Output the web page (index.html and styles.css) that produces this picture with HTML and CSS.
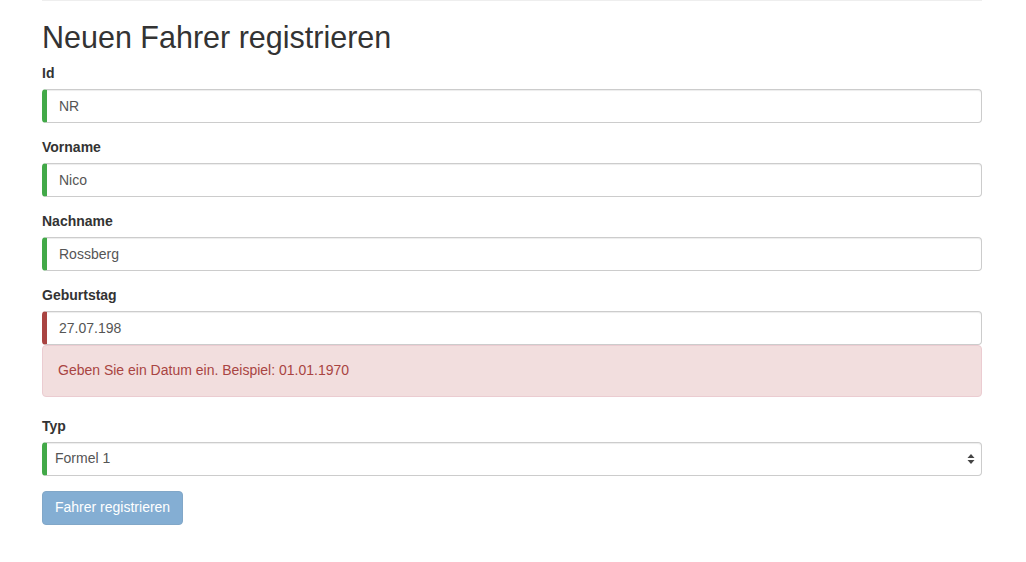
FILE: index.html
```html
<!DOCTYPE html>
<html lang="de">
<head>
<meta charset="utf-8">
<title>Neuen Fahrer registrieren</title>
<link rel="stylesheet" href="styles.css">
</head>
<body>
<div class="container">
  <hr class="rule">
  <h2 class="title">Neuen Fahrer registrieren</h2>
  <form class="form">
    <div class="form-group">
      <label class="label">Id</label>
      <input class="input valid" type="text" value="NR">
    </div>
    <div class="form-group">
      <label class="label">Vorname</label>
      <input class="input valid" type="text" value="Nico">
    </div>
    <div class="form-group">
      <label class="label">Nachname</label>
      <input class="input valid" type="text" value="Rossberg">
    </div>
    <div class="form-group">
      <label class="label">Geburtstag</label>
      <input class="input invalid" type="text" value="27.07.198">
      <div class="alert">Geben Sie ein Datum ein. Beispiel: 01.01.1970</div>
    </div>
    <div class="form-group">
      <label class="label">Typ</label>
      <div class="select-wrap">
        <select class="input select valid">
          <option>Formel 1</option>
        </select>
        <svg class="arrows" width="8" height="12" viewBox="0 0 8 12"><path d="M4 1 L7.5 5 L0.5 5 Z M4 11 L7.5 7 L0.5 7 Z" fill="#444"/></svg>
      </div>
    </div>
    <button class="btn" type="button" disabled>Fahrer registrieren</button>
  </form>
</div>
</body>
</html>
```
FILE: styles.css
```css
* { box-sizing: border-box; }
html, body { margin: 0; padding: 0; background: #fff; }
body {
  font-family: "Liberation Sans", Arial, Helvetica, sans-serif;
  font-size: 14px;
  line-height: 1.42857;
  color: #333;
}
.container {
  width: 940px;
  margin: 0 0 0 42px;
}
.rule {
  margin: 0 0 20px;
  border: 0;
  border-top: 1px solid #eee;
}
.title {
  margin: 20px 0 10px;
  font-size: 30.5px;
  font-weight: 500;
  line-height: 33px;
  color: #333;
}
.form { margin: 0; }
.form-group { margin-bottom: 15px; }
.label {
  display: block;
  margin-bottom: 5px;
  font-weight: bold;
  max-width: 100%;
}
.input {
  display: block;
  width: 100%;
  height: 34px;
  padding: 6px 12px;
  font-family: inherit;
  font-size: 14px;
  line-height: 1.42857;
  color: #555;
  background: #fff;
  border: 1px solid #ccc;
  border-radius: 4px;
  box-shadow: inset 0 1px 1px rgba(0,0,0,.075);
  outline: none;
}
.valid { border-left: 5px solid #42a948; }
.invalid { border-left: 5px solid #a94442; }
.select-wrap { position: relative; }
.select {
  -webkit-appearance: none;
  appearance: none;
  padding-left: 8px;
}
.arrows {
  position: absolute;
  right: 7px;
  top: 11px;
}
.alert {
  padding: 15px;
  margin-bottom: 20px;
  border: 1px solid #ebccd1;
  border-radius: 4px;
  background: #f2dede;
  color: #a94442;
}
.btn {
  display: inline-block;
  padding: 6px 12px;
  font-family: inherit;
  font-size: 14px;
  line-height: 1.42857;
  color: #fff;
  background: #337ab7;
  border: 1px solid #2e6da4;
  border-radius: 4px;
  opacity: .6;
  cursor: not-allowed;
}
```
